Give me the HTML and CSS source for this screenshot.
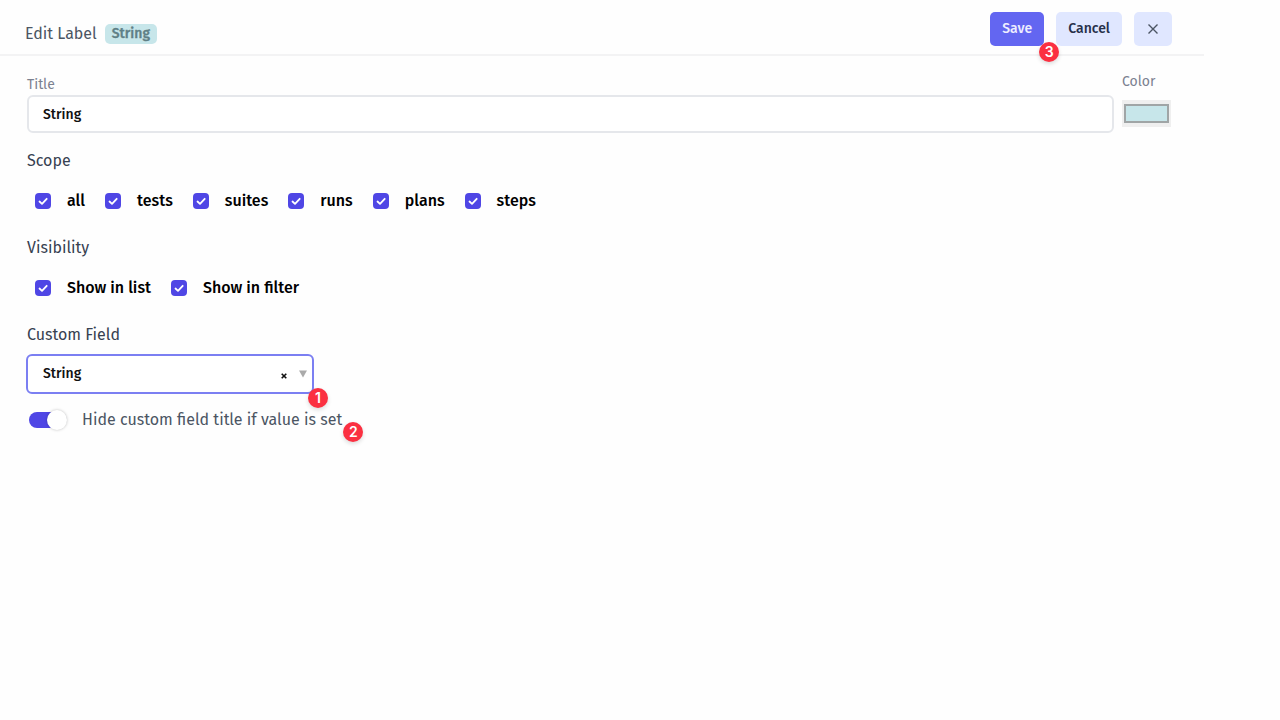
FILE: index.html
```html
<!DOCTYPE html>
<html lang="en">
<head>
<meta charset="utf-8">
<meta name="viewport" content="width=device-width, initial-scale=1">
<title>Edit Label</title>
<link rel="stylesheet" href="styles.css">
</head>
<body>
<form class="panel">
  <header class="header">
    <h1 class="heading">Edit Label</h1>
    <span class="tag">String</span>
    <div class="actions">
      <div class="anchor">
        <button class="btn btn-primary" type="submit">Save</button>
        <span class="pin pin-save">3</span>
      </div>
      <button class="btn" type="button">Cancel</button>
      <button class="btn btn-close" type="button" aria-label="Close">
        <svg width="12" height="12" viewBox="0 0 12 12" fill="none" stroke="currentColor" stroke-width="1.4"><path d="M1.5 1.5l9 9M10.5 1.5l-9 9"/></svg>
      </button>
    </div>
  </header>
  <main class="content">
    <div class="title-row">
      <div class="title-field">
        <label class="caption" for="title">Title</label>
        <input class="text-input" id="title" type="text" value="String">
      </div>
      <div class="color-field">
        <label class="caption" for="color">Color</label>
        <input class="color-input" id="color" type="color" value="#c7e6ea">
      </div>
    </div>

    <fieldset class="group">
      <legend class="legend">Scope</legend>
      <div class="checks">
        <label class="check"><input class="box" type="checkbox" checked>all</label>
        <label class="check"><input class="box" type="checkbox" checked>tests</label>
        <label class="check"><input class="box" type="checkbox" checked>suites</label>
        <label class="check"><input class="box" type="checkbox" checked>runs</label>
        <label class="check"><input class="box" type="checkbox" checked>plans</label>
        <label class="check"><input class="box" type="checkbox" checked>steps</label>
      </div>
    </fieldset>

    <fieldset class="group">
      <legend class="legend">Visibility</legend>
      <div class="checks">
        <label class="check"><input class="box" type="checkbox" checked>Show in list</label>
        <label class="check"><input class="box" type="checkbox" checked>Show in filter</label>
      </div>
    </fieldset>

    <label class="legend" for="custom">Custom Field</label>
    <div class="select-wrap">
      <select class="select" id="custom"><option>String</option></select>
      <button class="clear" type="button" aria-label="Clear"><svg width="6" height="6" viewBox="0 0 6 6" stroke="#111" stroke-width="1.6"><path d="M.7.7l4.6 4.6M5.3.7L.7 5.3"/></svg></button>
      <svg class="arrow" width="8" height="8" viewBox="0 0 8 8" fill="#aaa"><path d="M0 .5h8L4 7.5z"/></svg>
      <span class="pin pin-select">1</span>
    </div>
    <label class="toggle"><input class="switch" type="checkbox" role="switch" checked>Hide custom field title if value is set<span class="pin pin-toggle">2</span></label>
  </main>
</form>
</body>
</html>
```
FILE: styles.css
```css
* { box-sizing: border-box; }
body {
  margin: 0;
  min-height: 100vh;
  background: #fefefe;
  color: #111;
  font: 500 14px/20px "Fira Sans", Roboto, "Noto Sans", sans-serif;
}
button, input, select { font: inherit; color: inherit; margin: 0; }
.panel { margin-right: 76px; }
.header {
  display: flex;
  align-items: center;
  gap: 8px;
  padding: 12px 32px 8px 25px;
  border-bottom: 2px solid #f3f3f4;
}
.heading {
  margin: 10px 0 0;
  font-size: 16px;
  font-weight: 400;
  line-height: 20px;
  color: #4b5563;
}
.tag {
  margin-top: 10px;
  padding: 0 7px;
  border-radius: 5px;
  background: #c7e6ea;
  color: #5f8086;
  -webkit-text-stroke: 0.3px;
}
.actions { display: flex; gap: 12px; margin-left: auto; }
.anchor { position: relative; display: flex; }
.btn {
  height: 34px;
  padding: 0 12px;
  border: 0;
  border-radius: 5px;
  background: #e0e7ff;
  color: #27304a;
}
.btn-primary { background: #6366f1; color: #eef; }
.btn-close { display: grid; place-items: center; width: 38px; color: #4b5563; }
.pin {
  position: absolute;
  width: 20px;
  height: 20px;
  border-radius: 50%;
  background: #fb3041;
  color: #fff;
  text-align: center;
  font: 600 14px/20px Inter, sans-serif;
  box-shadow: 0 2px 4px rgba(0, 0, 0, .14);
}
.pin-save { right: -15px; bottom: -16px; }
.pin-select { right: -14px; bottom: -14px; }
.pin-toggle { right: -21px; bottom: -10px; }
.content { padding: 18px 33px 32px 27px; }
.title-row { display: flex; gap: 8px; }
.title-field { flex: 1; padding-top: 1px; }
.caption { display: block; color: #7b8190; font-weight: 400; }
.text-input {
  display: block;
  width: 100%;
  height: 38px;
  padding: 0 14px;
  border: 2px solid #e5e7eb;
  border-radius: 6px;
  background: #fff;
}
.color-input {
  display: block;
  width: 49px;
  height: 27px;
  margin-top: 8px;
  padding: 4px 2px;
  border: 0;
  background: #efefef;
}
.color-field .caption { margin-top: -2px; }
.color-input::-webkit-color-swatch-wrapper { padding: 0; }
.color-input::-webkit-color-swatch { border: 2px solid #a0a5a6; }
.group { margin: 0; padding: 0; border: 0; min-width: 0; }
.legend {
  display: block;
  padding: 17px 0 0;
  font-size: 16px;
  line-height: 22px;
  font-weight: 400;
  color: #374151;
}
.checks {
  display: flex;
  flex-wrap: wrap;
  gap: 20px;
  padding: 18px 8px 8px;
}
.check {
  display: flex;
  align-items: center;
  gap: 16px;
  font-size: 16px;
  line-height: 22px;
  color: #000;
}
.box {
  appearance: none;
  width: 16px;
  height: 16px;
  border-radius: 4px;
  background: #4f46e5 url("data:image/svg+xml,%3Csvg xmlns='http://www.w3.org/2000/svg' viewBox='0 0 16 16'%3E%3Cpath d='M4.5 8.5L7 10.8L11.7 5.8' fill='none' stroke='white' stroke-width='1.8' stroke-linecap='round' stroke-linejoin='round'/%3E%3C/svg%3E") center / 16px;
}
.select-wrap { position: relative; width: 288px; margin: 8px 0 0 -1px; }
.select {
  appearance: none;
  display: block;
  width: 100%;
  height: 40px;
  padding: 0 48px 0 15px;
  border: 2px solid #7b7ff2;
  border-radius: 6px;
  background: #fff;
  outline: 0;
}
.clear {
  position: absolute;
  top: 14px;
  right: 22px;
  display: grid;
  place-items: center;
  width: 16px;
  height: 16px;
  padding: 0;
  border: 0;
  background: none;
}
.arrow { position: absolute; top: 16px; right: 7px; }
.toggle {
  position: relative;
  display: inline-flex;
  align-items: center;
  gap: 15px;
  margin: 14px 0 0 2px;
  font-size: 16px;
  line-height: 24px;
  font-weight: 400;
  color: #4b5563;
}
.switch {
  appearance: none;
  display: flex;
  align-items: center;
  width: 38px;
  height: 16px;
  border-radius: 8px;
  background: linear-gradient(90deg, #4f46e5 28px, #e5e7eb 28px);
}
.switch::before {
  content: "";
  width: 20px;
  height: 20px;
  flex: none;
  margin-left: 18px;
  border-radius: 50%;
  background: #fff;
  box-shadow: 0 0 3px rgba(0, 0, 0, .25);
}
```
